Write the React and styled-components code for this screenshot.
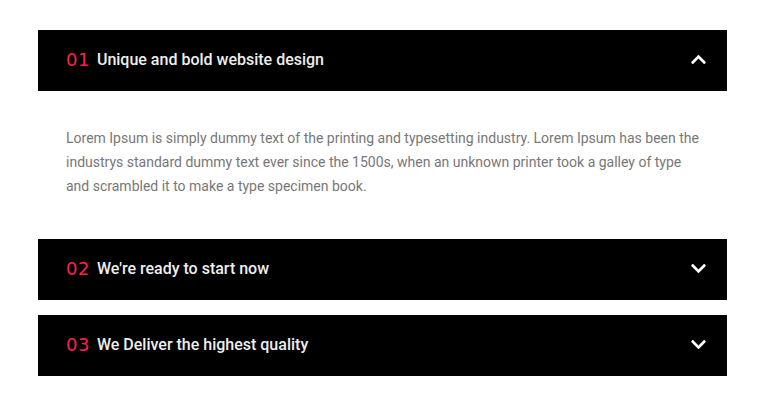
import React, { useState } from 'react';
import styled, { createGlobalStyle } from 'styled-components';
import { FaChevronUp, FaChevronDown } from 'react-icons/fa';

const GlobalStyle = createGlobalStyle`
  body {
    margin: 0;
    background: #fff;
    font-family: Roboto, "Liberation Sans", sans-serif;
  }
`;

const Wrapper = styled.div`
  padding: 30px 39px 0 38px;
`;

const Item = styled.div`
  margin-bottom: 15px;
`;

const Header = styled.button`
  display: flex;
  align-items: center;
  width: 100%;
  height: 61px;
  padding: 0 20px 2px 28px;
  border: 0;
  background: #000;
  color: #fff;
  cursor: pointer;
  text-align: left;
`;

const Num = styled.span`
  font-family: "DejaVu Sans", sans-serif;
  font-size: 18px;
  color: #ff1f4f;
  margin-right: 7px;
  letter-spacing: 0.5px;
`;

const Title = styled.span`
  flex: 1;
  font-family: Roboto, sans-serif;
  font-weight: 500;
  font-size: 16px;
  color: #eeeeee;
`;

const Chevron = styled.span`
  display: flex;
  font-size: 17px;
`;

const Body = styled.p`
  margin: 0;
  padding: 35px 28px 26px;
  font-size: 14px;
  line-height: 24px;
  color: #777;
`;

const items = [
  {
    num: '01',
    title: 'Unique and bold website design',
    text: 'Lorem Ipsum is simply dummy text of the printing and typesetting industry. Lorem Ipsum has been the industrys standard dummy text ever since the 1500s, when an unknown printer took a galley of type and scrambled it to make a type specimen book.',
  },
  { num: '02', title: "We're ready to start now", text: 'Lorem Ipsum is simply dummy text of the printing and typesetting industry.' },
  { num: '03', title: 'We Deliver the highest quality', text: 'Lorem Ipsum is simply dummy text of the printing and typesetting industry.' },
];

export default function App() {
  const [open, setOpen] = useState(0);
  return (
    <Wrapper>
      <GlobalStyle />
      {items.map((it, i) => (
        <Item key={it.num}>
          <Header onClick={() => setOpen(open === i ? -1 : i)}>
            <Num>{it.num}</Num>
            <Title>{it.title}</Title>
            <Chevron>{open === i ? <FaChevronUp /> : <FaChevronDown />}</Chevron>
          </Header>
          {open === i && <Body>{it.text}</Body>}
        </Item>
      ))}
    </Wrapper>
  );
}
